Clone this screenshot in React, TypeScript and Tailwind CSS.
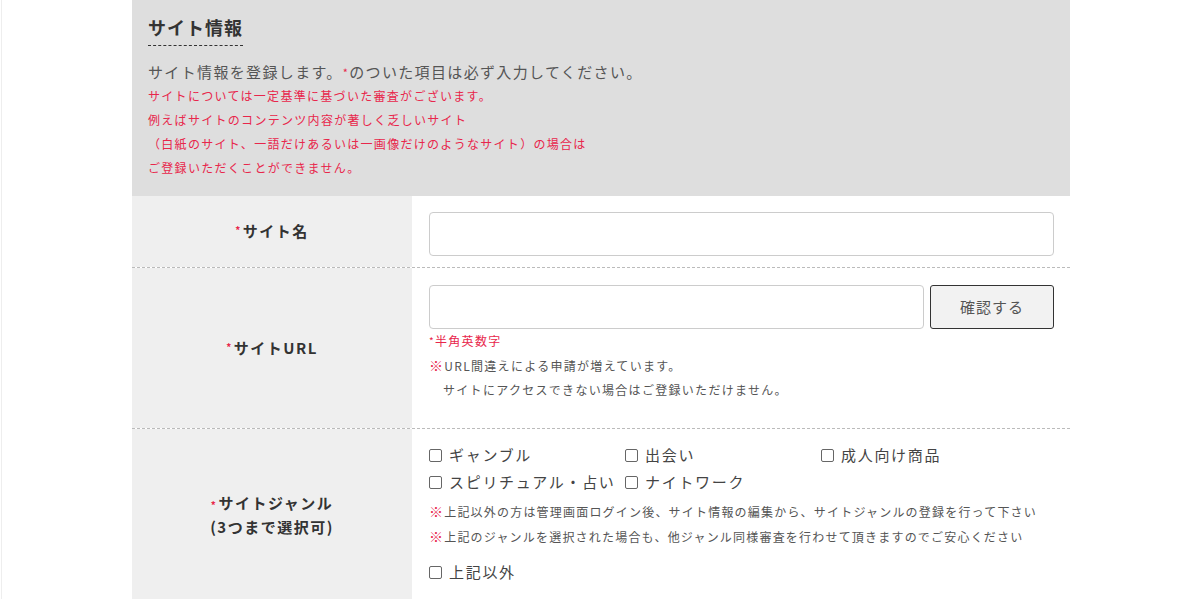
import React from "react";

const font = { fontFamily: '"Noto Sans CJK JP", "Noto Sans", sans-serif' };

function Req() {
  return <span className="text-[#e8264b] text-[10px] align-top relative top-[2px] mr-[1px]">*</span>;
}

function Box({ label, className = "" }: { label: string; className?: string }) {
  return (
    <label className={`flex items-center h-[27px] ${className}`}>
      <span className="inline-block w-[13px] h-[13px] border border-[#666] rounded-[2px] bg-white mr-[7px] shrink-0" />
      <span className="text-[15px] tracking-[1.7px] text-[#444] whitespace-nowrap">{label}</span>
    </label>
  );
}

export default function App() {
  return (
    <div className="w-[1200px] h-[599px] overflow-hidden bg-white" style={font}>
      <div className="ml-px h-full border-l border-[#eeeeee] pl-[130px]">
        <div className="w-[938px]">
          {/* header */}
          <div className="bg-[#dedede] pl-4 pr-4 pt-[14px] pb-4">
            <div className="inline-block border-b border-dashed border-[#333] pb-[4px]">
              <h2 className="text-[18px] leading-[27px] font-bold tracking-[1px] text-[#333]">サイト情報</h2>
            </div>
            <p className="mt-[14px] text-[15px] leading-[24px] tracking-[1.35px] text-[#555]">
              サイト情報を登録します。<span className="text-[#e8264b] text-[11px] align-top">*</span>のついた項目は必ず入力してください。
            </p>
            <div className="text-[12px] leading-[24px] tracking-[1.3px] text-[#e8264b]">
              <p>サイトについては一定基準に基づいた審査がございます。</p>
              <p>例えばサイトのコンテンツ内容が著しく乏しいサイト</p>
              <p>（白紙のサイト、一語だけあるいは一画像だけのようなサイト）の場合は</p>
              <p>ご登録いただくことができません。</p>
            </div>
          </div>

          {/* row 1 */}
          <div className="flex border-b border-dashed border-[#bbbbbb]">
            <div className="w-[280px] bg-[#efefef] flex items-center justify-center">
              <span className="text-[15px] font-bold tracking-[1.5px] text-[#333]"><Req />サイト名</span>
            </div>
            <div className="flex-1 pl-[17px] pr-4 pt-4 pb-[11px] bg-white">
              <div className="h-[44px] border border-[#cccccc] rounded-[4px] bg-white" />
            </div>
          </div>

          {/* row 2 */}
          <div className="flex border-b border-dashed border-[#bbbbbb]">
            <div className="w-[280px] bg-[#efefef] flex items-center justify-center">
              <span className="text-[15px] font-bold tracking-[1.5px] text-[#333]"><Req />サイトURL</span>
            </div>
            <div className="flex-1 pl-[17px] pr-4 pt-[17px] pb-[26px] bg-white">
              <div className="flex gap-[6px] h-[44px]">
                <div className="flex-1 border border-[#cccccc] rounded-[4px] bg-white" />
                <button className="w-[124px] border border-[#333] rounded-[3px] bg-[#f2f2f2] text-[15px] tracking-[1px] text-[#555]">確認する</button>
              </div>
              <p className="text-[12px] leading-[24px] tracking-[1.3px] text-[#e8264b]"><span className="text-[10px] align-top">*</span>半角英数字</p>
              <p className="text-[12px] leading-[24px] tracking-[1.3px] text-[#555]"><span className="text-[#e8264b] text-[14px]">※</span>URL間違えによる申請が増えています。</p>
              <p className="text-[12px] leading-[24px] tracking-[1.3px] text-[#555] pl-[14px]">サイトにアクセスできない場合はご登録いただけません。</p>
            </div>
          </div>

          {/* row 3 */}
          <div className="flex">
            <div className="w-[280px] bg-[#efefef] flex items-center justify-center">
              <div className="text-center text-[15px] font-bold tracking-[1.5px] leading-[24px] text-[#333]">
                <div><Req />サイトジャンル</div>
                <div>(3つまで選択可)</div>
              </div>
            </div>
            <div className="flex-1 pl-[17px] pr-4 pt-[13px] pb-[14px] bg-white">
              <div className="grid grid-cols-[196px_196px_196px]">
                <Box label="ギャンブル" />
                <Box label="出会い" />
                <Box label="成人向け商品" />
                <Box label="スピリチュアル・占い" />
                <Box label="ナイトワーク" />
              </div>
              <div className="mt-[3px] text-[12px] leading-[24px] tracking-[1.2px] text-[#555]">
                <p><span className="text-[#e8264b] text-[14px]">※</span>上記以外の方は管理画面ログイン後、サイト情報の編集から、サイトジャンルの登録を行って下さい</p>
                <p><span className="text-[#e8264b] text-[14px]">※</span>上記のジャンルを選択された場合も、他ジャンル同様審査を行わせて頂きますのでご安心ください</p>
              </div>
              <div className="mt-[10px]">
                <Box label="上記以外" />
              </div>
            </div>
          </div>
        </div>
      </div>
    </div>
  );
}
